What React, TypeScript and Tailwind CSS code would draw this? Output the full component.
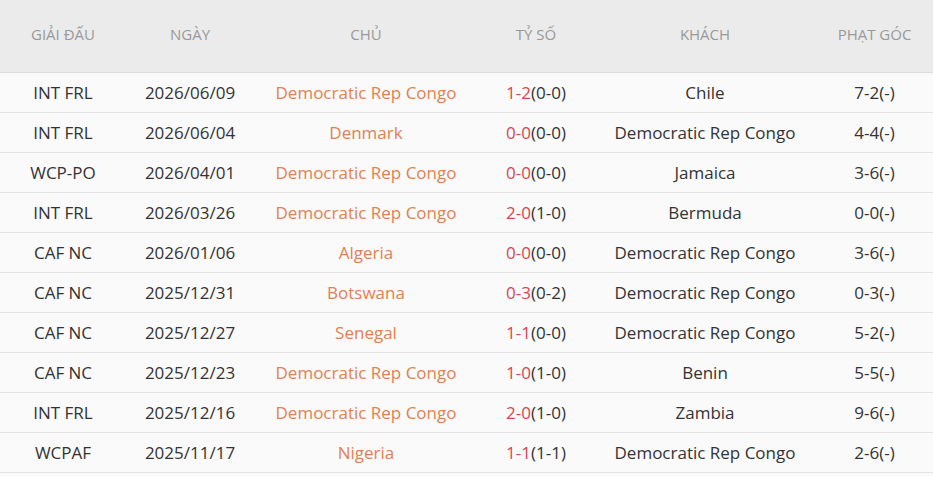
const rows = [
  ["INT FRL", "2026/06/09", "Democratic Rep Congo", "1-2", "(0-0)", "Chile", "7-2(-)"],
  ["INT FRL", "2026/06/04", "Denmark", "0-0", "(0-0)", "Democratic Rep Congo", "4-4(-)"],
  ["WCP-PO", "2026/04/01", "Democratic Rep Congo", "0-0", "(0-0)", "Jamaica", "3-6(-)"],
  ["INT FRL", "2026/03/26", "Democratic Rep Congo", "2-0", "(1-0)", "Bermuda", "0-0(-)"],
  ["CAF NC", "2026/01/06", "Algeria", "0-0", "(0-0)", "Democratic Rep Congo", "3-6(-)"],
  ["CAF NC", "2025/12/31", "Botswana", "0-3", "(0-2)", "Democratic Rep Congo", "0-3(-)"],
  ["CAF NC", "2025/12/27", "Senegal", "1-1", "(0-0)", "Democratic Rep Congo", "5-2(-)"],
  ["CAF NC", "2025/12/23", "Democratic Rep Congo", "1-0", "(1-0)", "Benin", "5-5(-)"],
  ["INT FRL", "2025/12/16", "Democratic Rep Congo", "2-0", "(1-0)", "Zambia", "9-6(-)"],
  ["WCPAF", "2025/11/17", "Nigeria", "1-1", "(1-1)", "Democratic Rep Congo", "2-6(-)"],
];

const cols = "grid grid-cols-[126px_128px_224px_116px_222px_117px]";

const App = () => {
  return (
    <div className="w-[933px] h-[477px] bg-[#fafafa] font-['Open_Sans',sans-serif] text-[#333] overflow-hidden">
      <div className={`${cols} h-[73px] pb-[4px] bg-[#ebebeb] border-b border-[#dedede] items-center text-[15px] text-[#999] text-center`}>
        <div>GIẢI ĐẤU</div>
        <div>NGÀY</div>
        <div>CHỦ</div>
        <div>TỶ SỐ</div>
        <div>KHÁCH</div>
        <div>PHẠT GÓC</div>
      </div>
      {rows.map((r, i) => (
        <div
          key={i}
          className={`${cols} h-[40px] border-b border-[#e3e3e3] items-center text-[17px] text-center`}
        >
          <div>{r[0]}</div>
          <div>{r[1]}</div>
          <div className="text-[#e3804f]">{r[2]}</div>
          <div>
            <span className="text-[#d5474f]">{r[3]}</span>
            {r[4]}
          </div>
          <div>{r[5]}</div>
          <div>{r[6]}</div>
        </div>
      ))}
    </div>
  );
};

export default App;
